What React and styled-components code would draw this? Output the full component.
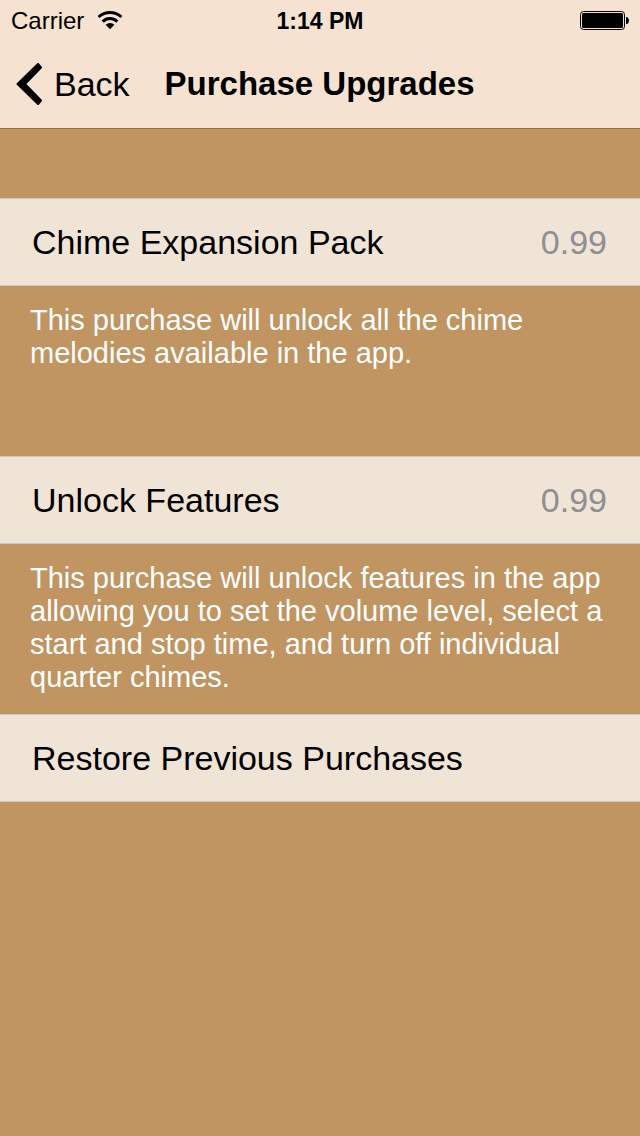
import React from "react";
import styled, { createGlobalStyle } from "styled-components";

const sections = [
  {
    title: "Chime Expansion Pack",
    price: "0.99",
    note: "This purchase will unlock all the chime melodies available in the app.",
    space: "86px",
  },
  {
    title: "Unlock Features",
    price: "0.99",
    note: "This purchase will unlock features in the app allowing you to set the volume level, select a start and stop time, and turn off individual quarter chimes.",
    space: "20px",
  },
  { title: "Restore Previous Purchases" },
];

const App = () => {
  return (
    <>
      <GlobalStyle />
      <Header>
        <StatusBar>
          <Carrier>
            Carrier
            <WifiIcon />
          </Carrier>
          <Time>1:14 PM</Time>
          <BatteryIcon />
        </StatusBar>
        <NavBar>
          <BackButton type="button">
            <BackIcon />
            Back
          </BackButton>
          <Title>Purchase Upgrades</Title>
        </NavBar>
      </Header>
      <List>
        {sections.map((section) => (
          <Section key={section.title}>
            <Row type="button">
              <span>{section.title}</span>
              {section.price && <Price>{section.price}</Price>}
            </Row>
            {section.note && <Note $space={section.space}>{section.note}</Note>}
          </Section>
        ))}
      </List>
    </>
  );
};

export default App;

const WifiIcon = () => (
  <svg width="26" height="20" viewBox="0 0 26 20" fill="none" stroke="#000" strokeWidth="3" aria-hidden="true">
    <path d="M1.6 6A16.8 16.8 0 0 1 24.4 6" />
    <path d="M5.7 10.6A10.4 10.4 0 0 1 20.3 10.6" />
    <path d="M13 18.2L8.6 13.8A6.4 6.4 0 0 1 17.4 13.8Z" fill="#000" stroke="none" />
  </svg>
);

const BatteryIcon = () => (
  <svg width="50" height="20" viewBox="0 0 50 20" aria-hidden="true">
    <rect x="1.5" y="0.5" width="44" height="18" rx="3" fill="none" stroke="#000" />
    <rect x="3" y="2" width="41" height="15" rx="1.5" />
    <path d="M47 6H48Q50 7 50 9.5T48 13H47Z" />
  </svg>
);

const BackIcon = () => (
  <svg width="26" height="42" viewBox="0 0 26 42" aria-hidden="true">
    <path
      d="M1.5 21L22 1L25 4.5L9 21L25 37.5L22 41Z"
      stroke="#000"
      strokeWidth="2"
      strokeLinejoin="round"
    />
  </svg>
);

const GlobalStyle = createGlobalStyle`
  * {
    box-sizing: border-box;
  }
  body {
    margin: 0;
    background-color: #c09562;
    color: #000;
    font-family: "Liberation Sans", Arial, sans-serif;
  }
`;

const Header = styled.header`
  background-color: #f5e2d1;
  border-bottom: 1px solid #8f6e47;
`;

const StatusBar = styled.div`
  display: grid;
  grid-template-columns: 1fr auto 1fr;
  align-items: center;
  height: 40px;
  padding: 2px 11px 0;
  font-size: 24px;
  > :last-child {
    justify-self: end;
  }
`;

const Carrier = styled.div`
  display: flex;
  align-items: center;
  gap: 13px;
`;

const Time = styled.div`
  font-size: 23px;
  font-weight: bold;
`;

const NavBar = styled.nav`
  display: flex;
  align-items: center;
  gap: 35px;
  height: 88px;
  padding: 0 16px;
`;

const BackButton = styled.button`
  display: flex;
  align-items: center;
  gap: 12px;
  padding: 0;
  border: 0;
  background: none;
  color: #000;
  font-family: inherit;
  font-size: 34px;
  cursor: pointer;
`;

const Title = styled.h1`
  margin: 0;
  font-size: 33px;
  font-weight: bold;
`;

const List = styled.main`
  padding-top: 69px;
`;

const Section = styled.section`
  display: flex;
  flex-direction: column;
`;

const Row = styled.button`
  display: flex;
  align-items: center;
  justify-content: space-between;
  height: 88px;
  padding: 0 33px 0 32px;
  border: solid #c8c7cc;
  border-width: 1px 0;
  background-color: #f0e4d6;
  color: #000;
  font-family: inherit;
  font-size: 34px;
  text-align: left;
  cursor: pointer;
`;

const Price = styled.span`
  color: #8e8e93;
`;

const Note = styled.p`
  margin: 0;
  padding: 18px 30px ${(props) => props.$space};
  color: #fff;
  font-size: 29px;
  line-height: 33px;
`;
